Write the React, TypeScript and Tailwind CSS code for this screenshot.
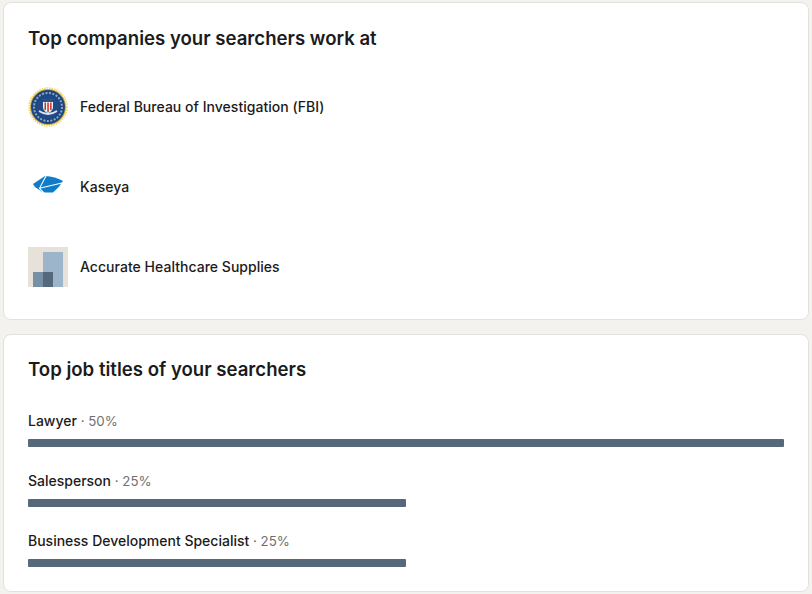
const companies = [
  { name: "Federal Bureau of Investigation (FBI)", logo: <FbiLogo /> },
  { name: "Kaseya", logo: <KaseyaLogo /> },
  { name: "Accurate Healthcare Supplies", logo: <PlaceholderLogo /> },
];

const titles = [
  { name: "Lawyer", pct: 50, width: "100%" },
  { name: "Salesperson", pct: 25, width: "50%" },
  { name: "Business Development Specialist", pct: 25, width: "50%" },
];

function FbiLogo() {
  return (
    <svg viewBox="0 0 40 40" className="w-10 h-10">
      <circle cx="20" cy="20" r="19" fill="none" stroke="#efd56a" strokeWidth="1.5" strokeDasharray="1.5 1" />
      <circle cx="20" cy="20" r="18" fill="#c9a93a" />
      <circle cx="20" cy="20" r="17" fill="#1d4680" />
      <circle cx="20" cy="20" r="14" fill="none" stroke="#8ea6c4" strokeWidth="2" strokeDasharray="2 1.5" />
      <circle cx="20" cy="20" r="11.5" fill="#1f4a86" />
      <path d="M15 12h10v8q0 4-5 6q-5-2-5-6z" fill="#f4f4f4" />
      <path d="M15 12h10v3h-10z" fill="#27508e" />
      <path d="M16.500 15.500h1.500v7.500h-1.500zM19.300 15.500h1.500v9.500h-1.500zM22.100 15.500h1.500v7.500h-1.500z" fill="#c8322f" />
      <path d="M11 24q9 6 18 0" fill="none" stroke="#dfe5ec" strokeWidth="1.800" />
    </svg>
  );
}

function KaseyaLogo() {
  return (
    <svg viewBox="0 0 40 40" className="w-10 h-10">
      <path d="M5 17L17 9Q27 9.500 35 14Q31 21 25 25.500L15 25.500L7 20z" fill="#0f7cc9" />
      <path d="M18.500 8L11.500 21.300L16.500 26.500M11.500 21.300L36 15.500" fill="none" stroke="#fff" strokeWidth="1.100" />
    </svg>
  );
}

function PlaceholderLogo() {
  return (
    <div className="relative w-10 h-10 bg-[#e6e1d9]">
      <div className="absolute left-[15px] top-[5px] w-5 h-[35px] bg-[#9db5cb]" />
      <div className="absolute left-[5px] top-[25px] w-[10px] h-[15px] bg-[#788fa8]" />
      <div className="absolute left-[15px] top-[25px] w-[10px] h-[15px] bg-[#56687c]" />
    </div>
  );
}

export default function App() {
  return (
    <div className="w-[812px] h-[594px] overflow-hidden bg-[#f3f2ee] px-[3px] pt-[2px] flex flex-col gap-[14px] text-[#1b1b1b] font-['Inter','Liberation_Sans',sans-serif]">
      <section className="h-[318px] bg-white rounded-lg border border-[#e3e1dc] px-6 pt-[22px]">
        <h2 className="text-[18.6px] font-semibold leading-[26px]">Top companies your searchers work at</h2>
        <ul className="mt-9 flex flex-col gap-10">
          {companies.map((c) => (
            <li key={c.name} className="flex items-center gap-3 h-10">
              {c.logo}
              <span className="text-sm font-medium tracking-[0.03px]">{c.name}</span>
            </li>
          ))}
        </ul>
      </section>

      <section className="h-[258px] bg-white rounded-lg border border-[#e3e1dc] px-6 pt-[21px]">
        <h2 className="text-[18.6px] font-semibold leading-[26px]">Top job titles of your searchers</h2>
        <ul className="mt-[29px] flex flex-col gap-6">
          {titles.map((t) => (
            <li key={t.name}>
              <p className="text-sm leading-5">
                <span className="font-medium">{t.name}</span>
                <span className="text-[13.3px] text-[#6f6f6f]"> · {t.pct}%</span>
              </p>
              <div className="mt-2 h-2 w-full">
                <div className="h-2 rounded-[1px] bg-[#56687a]" style={{ width: t.width }} />
              </div>
            </li>
          ))}
        </ul>
      </section>
    </div>
  );
}
